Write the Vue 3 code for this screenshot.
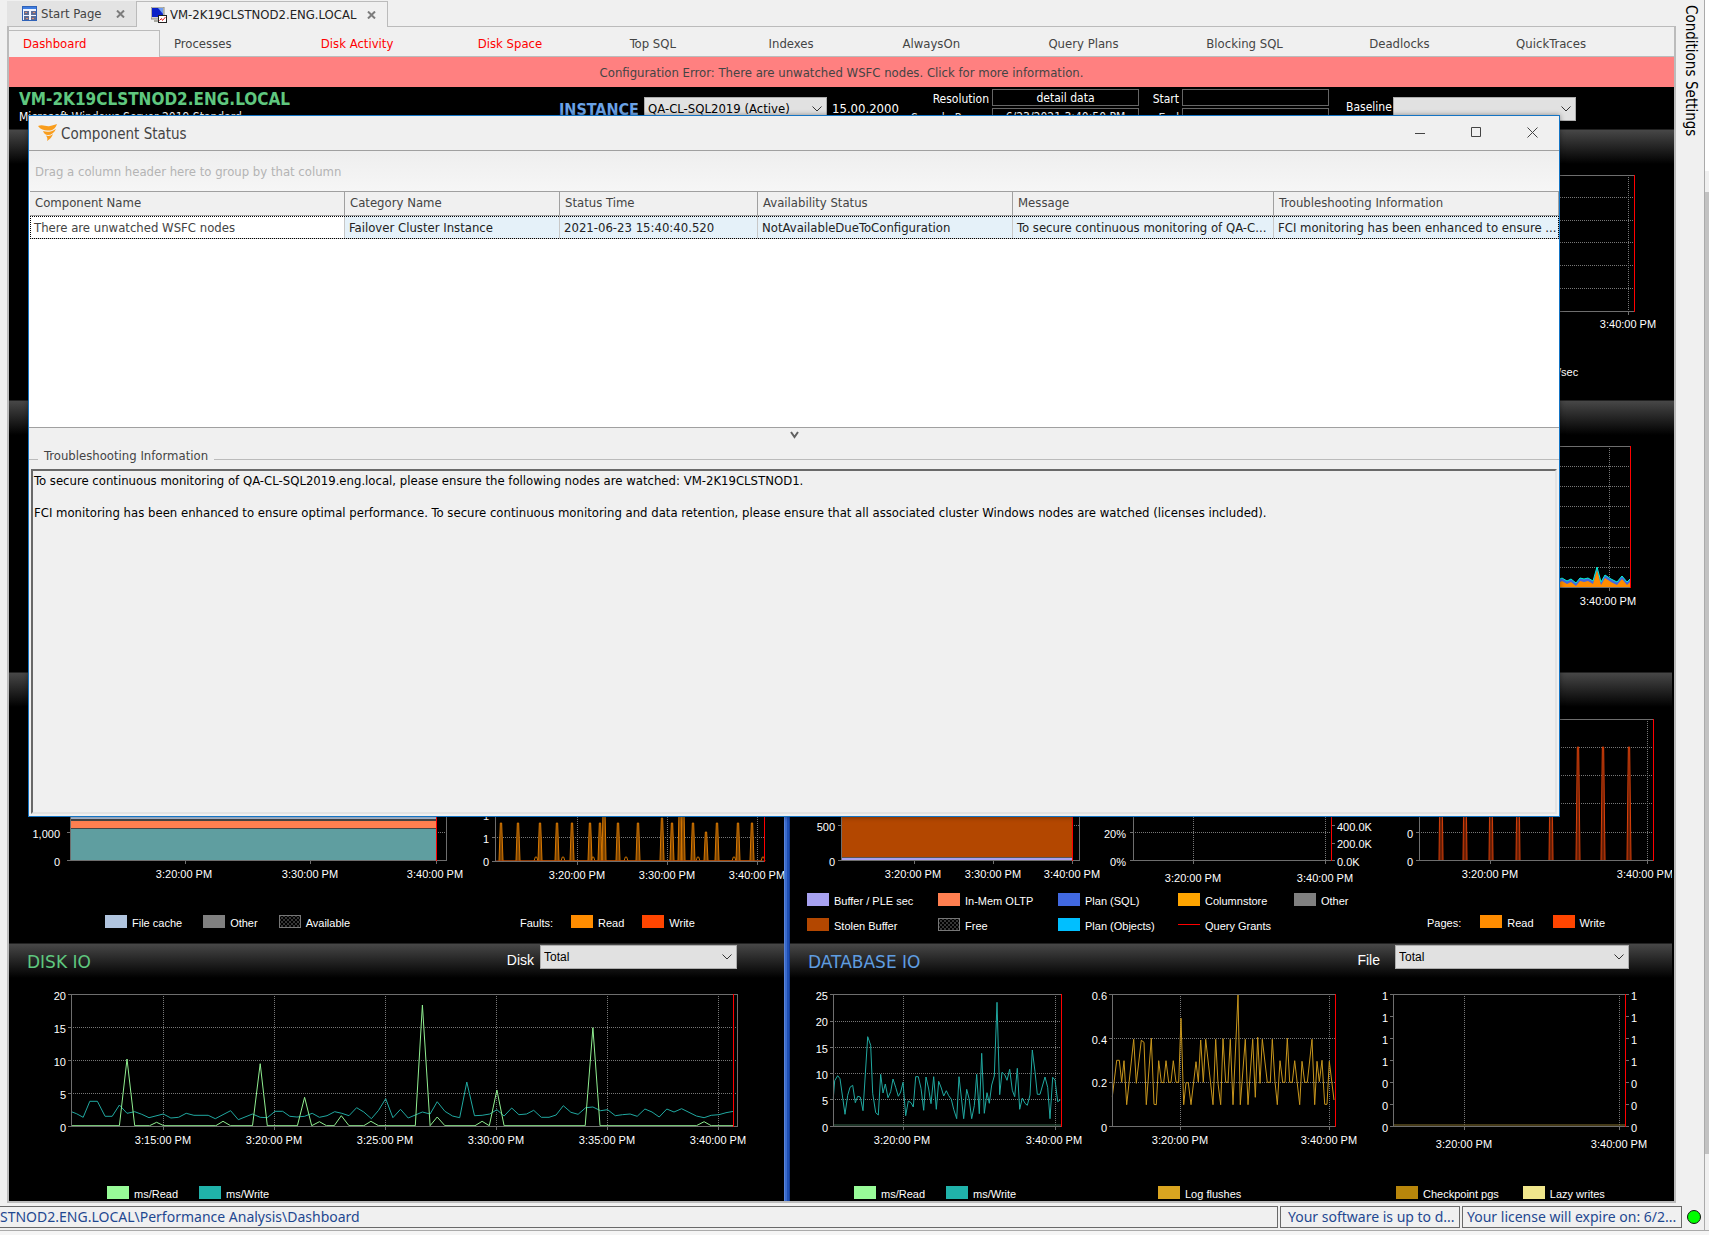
<script setup>
import { ref } from 'vue'

const mainTabs = [
  { label: 'Dashboard', size: 151, active: true, alert: true },
  { label: 'Processes', size: 147 },
  { label: 'Disk Activity', size: 157, alert: true },
  { label: 'Disk Space', size: 152, alert: true },
  { label: 'Top SQL', size: 139 },
  { label: 'Indexes', size: 134 },
  { label: 'AlwaysOn', size: 146 },
  { label: 'Query Plans', size: 158 },
  { label: 'Blocking SQL', size: 163 },
  { label: 'Deadlocks', size: 147 },
  { label: 'QuickTraces', size: 172 },
]
const tabColumns = mainTabs.map((t) => `${t.size}fr`).join(' ')

const instance = ref('QA-CL-SQL2019 (Active)')
const baseline = ref('')

const columns = [
  { name: 'Component Name', value: 'There are unwatched WSFC nodes', width: 315 },
  { name: 'Category Name', value: 'Failover Cluster Instance', width: 215 },
  { name: 'Status Time', value: '2021-06-23 15:40:40.520', width: 198 },
  { name: 'Availability Status', value: 'NotAvailableDueToConfiguration', width: 255 },
  { name: 'Message', value: 'To secure continuous monitoring of QA-C...', width: 261 },
  { name: 'Troubleshooting Information', value: 'FCI monitoring has been enhanced to ensure ...', width: 285 },
]
const totalWidth = columns.reduce((sum, c) => sum + c.width, 0)

// Turns a flat list of raw samples into polyline points on the dashboard canvas.
function points(raw, x0, y0, sx = 1, sy = 1) {
  const out = []
  for (let i = 0; i < raw.length; i += 2) {
    out.push(`${(x0 + raw[i] * sx).toFixed(1)},${(y0 + raw[i + 1] * sy).toFixed(1)}`)
  }
  return out.join(' ')
}

function spikes(peaks, base, half) {
  return peaks
    .map(([x, y]) => `${x - half},${base} ${x - half / 3},${y} ${x + half / 3},${y} ${x + half},${base}`)
    .join(' ')
}

const diskRead = [140, 437, 234, 437, 249, 237, 264, 437, 293, 437, 307, 427, 321, 437, 423, 437, 437, 424, 452, 437, 495, 437, 510, 251, 524, 437, 583, 437, 597, 352, 611, 437, 626, 425, 640, 437, 655, 437, 669, 407, 684, 437, 713, 437, 727, 424, 742, 437, 814, 437, 828, 75, 843, 437, 857, 411, 872, 437, 931, 437, 945, 424, 959, 437, 974, 330, 988, 437, 1147, 437, 1162, 143, 1176, 437, 1365, 437, 1380, 425, 1394, 437, 1438, 437]
const diskWrite = [140, 395, 150, 401, 163, 412, 176, 364, 191, 364, 206, 409, 220, 409, 234, 375, 249, 400, 264, 395, 278, 403, 292, 413, 320, 402, 335, 414, 350, 412, 365, 400, 380, 406, 408, 406, 422, 416, 452, 392, 467, 419, 495, 402, 510, 412, 524, 413, 539, 394, 554, 394, 568, 409, 582, 411, 597, 409, 612, 400, 626, 412, 641, 407, 656, 395, 670, 400, 684, 407, 699, 383, 713, 396, 728, 416, 742, 391, 756, 356, 770, 413, 785, 388, 800, 414, 814, 405, 828, 396, 843, 402, 857, 365, 872, 394, 887, 408, 901, 413, 915, 306, 930, 407, 945, 406, 960, 402, 974, 389, 988, 408, 1003, 384, 1017, 404, 1032, 402, 1046, 391, 1061, 412, 1076, 412, 1090, 405, 1104, 377, 1119, 397, 1133, 403, 1148, 383, 1162, 381, 1177, 392, 1191, 389, 1206, 407, 1220, 404, 1235, 402, 1249, 409, 1264, 387, 1278, 396, 1292, 411, 1307, 387, 1321, 396, 1336, 386, 1365, 408, 1380, 413, 1394, 406, 1409, 404, 1423, 398, 1438, 394]
const dbWrite = [160, 355, 164, 302, 173, 287, 180, 296, 195, 403, 203, 346, 210, 322, 218, 316, 226, 368, 233, 349, 241, 351, 249, 392, 263, 170, 272, 196, 278, 340, 287, 398, 295, 405, 302, 283, 309, 339, 316, 312, 324, 353, 332, 335, 339, 297, 347, 322, 355, 349, 362, 336, 369, 307, 377, 407, 385, 363, 393, 368, 400, 381, 407, 290, 415, 290, 423, 325, 431, 391, 438, 291, 446, 327, 453, 371, 461, 290, 469, 388, 476, 304, 484, 324, 491, 348, 499, 332, 506, 347, 514, 358, 521, 388, 530, 416, 537, 290, 551, 416, 560, 328, 567, 355, 575, 416, 583, 377, 590, 283, 598, 401, 605, 220, 613, 400, 621, 338, 628, 370, 635, 315, 643, 288, 651, 67, 659, 344, 666, 277, 674, 284, 681, 301, 689, 268, 697, 331, 704, 350, 712, 265, 719, 388, 727, 354, 735, 370, 742, 376, 750, 345, 757, 210, 765, 275, 772, 343, 780, 343, 795, 291, 803, 322, 810, 416, 818, 292, 825, 300, 833, 365, 841, 360]
const logFlushes = [997, 350, 1010, 241, 1018, 241, 1025, 307, 1032, 242, 1040, 374, 1061, 178, 1069, 310, 1084, 181, 1092, 187, 1099, 374, 1114, 175, 1122, 373, 1129, 374, 1136, 242, 1144, 307, 1151, 308, 1158, 242, 1166, 307, 1173, 307, 1180, 242, 1188, 307, 1196, 307, 1203, 115, 1211, 374, 1218, 308, 1225, 308, 1233, 374, 1248, 245, 1255, 306, 1262, 180, 1270, 307, 1277, 178, 1299, 374, 1307, 178, 1314, 310, 1322, 374, 1329, 176, 1337, 307, 1344, 307, 1351, 178, 1359, 374, 1374, 45, 1381, 374, 1396, 178, 1404, 374, 1418, 178, 1426, 352, 1433, 172, 1440, 310, 1447, 178, 1462, 307, 1471, 307, 1477, 178, 1485, 305, 1492, 374, 1500, 242, 1508, 307, 1515, 307, 1522, 175, 1529, 307, 1537, 307, 1544, 242, 1559, 374, 1566, 244, 1574, 307, 1582, 307, 1596, 178, 1604, 374, 1611, 244, 1618, 305, 1626, 241, 1634, 373, 1641, 373, 1648, 244, 1662, 360]
const netArea = [1550, 580, 1560, 579, 1562, 578, 1567, 581, 1571, 579, 1576, 583, 1580, 578, 1584, 579, 1588, 578, 1593, 581, 1597, 567, 1601, 582, 1605, 575, 1611, 579, 1617, 582, 1622, 576, 1627, 582, 1631, 578]
const netLower = netArea.map((v, i) => (i % 2 ? Math.min(v + 3, 587) : v))

const faultPeaks = [[501, 823], [518, 823], [540, 823], [557, 823], [572, 823], [590, 823], [600, 823], [604, 790], [618, 823], [638, 823], [662, 818], [672, 823], [680, 790], [683, 790], [693, 823], [706, 832], [717, 823], [738, 823], [752, 823]]
const faultBumps = [[536, 857], [563, 857], [593, 857], [626, 857], [698, 857], [734, 857], [763, 857]]
const pagePeaks = [1441, 1465, 1491, 1518, 1551, 1578, 1603, 1629].map((x) => [x, 747])

const panels = [
  { key: 'network', side: 'left', groups: [] },
  {
    key: 'activity', side: 'right', wide: true,
    groups: [{
      key: 'a', size: 884, indent: 768, gap: 19, legend: [{ label: '/sec' }],
      charts: [{ key: 'a', box: [790, 164, 884, 198], frame: [1440, 175, 1634, 311], now: 1634, h: [197, 220, 242, 265, 288], v: [1628], xLabels: [[1628, '3:40:00 PM']], xLabelY: 328 }],
    }],
  },
  { key: 'cpu', side: 'left', groups: [] },
  {
    key: 'waits', side: 'right', wide: true,
    groups: [{
      key: 'a', size: 884, indent: 768, gap: 19, legend: [],
      charts: [{
        key: 'a', box: [790, 435, 884, 198], frame: [1440, 446, 1630, 587], now: 1630, h: [466, 486, 506, 527, 547, 567], v: [1609], xLabels: [[1608, '3:40:00 PM']], xLabelY: 605,
        areas: [
          { fill: '#4169e1', points: `1550,587 ${points(netArea, 0, 0)} 1631,587` },
          { fill: '#ff8c00', points: `1550,587 ${points(netLower, 0, 0)} 1631,587` },
        ],
        lines: [{ color: '#00f5d8', points: points(netArea, 0, 0) }],
      }],
    }],
  },
  {
    key: 'memory', side: 'left',
    groups: [
      {
        key: 'a', size: 471, indent: 96, gap: 21,
        legend: [{ color: '#b0c4de', label: 'File cache' }, { color: '#808080', label: 'Other' }, { hatch: true, label: 'Available' }],
        charts: [{
          key: 'a', box: [9, 707, 471, 206], frame: [70, 719, 446, 860], now: 436, h: [832],
          rects: [[71, 719, 365, 101, '#b0c4de'], [71, 819, 365, 3, '#444444'], [71, 821, 365, 7, '#ff7f50'], [71, 828, 365, 1, '#444444'], [71, 829, 365, 31, '#5f9ea0']],
          ticks: [185, 310, 436], yTicks: [832, 860], yLabels: [[838, '1,000'], [866, '0']], yLabelX: 60,
          xLabels: [[184, '3:20:00 PM'], [310, '3:30:00 PM'], [435, '3:40:00 PM']], xLabelY: 878,
        }],
      },
      {
        key: 'b', size: 304, indent: 40, gap: 18,
        legend: [{ label: 'Faults:' }, { color: '#ff8c00', label: 'Read' }, { color: '#ff4500', label: 'Write' }],
        charts: [{
          key: 'b', box: [480, 707, 304, 206], frame: [495, 719, 764, 861], now: 764, h: [837], v: [577, 667, 757], yTicks: [837, 861],
          yLabels: [[820, '1'], [843, '1'], [866, '0']], yLabelX: 489,
          xLabels: [[577, '3:20:00 PM'], [667, '3:30:00 PM'], [757, '3:40:00 PM']], xLabelY: 879,
          areas: [{ fill: '#7a4300', points: spikes(faultPeaks, 861, 2) }],
          lines: [{ color: '#d87800', points: spikes(faultPeaks, 861, 2) }, { color: '#c87000', points: spikes(faultBumps, 861, 2) }, { color: '#b03a10', points: '495,861 764,861' }],
        }],
      },
    ],
  },
  {
    key: 'sql-memory', side: 'right',
    groups: [
      {
        key: 'a', size: 595, indent: 17, grid: true,
        legend: [
          { color: '#a7a1f0', label: 'Buffer / PLE sec' }, { color: '#ff7f50', label: 'In-Mem OLTP' }, { color: '#4169e1', label: 'Plan (SQL)' }, { color: '#ffa500', label: 'Columnstore' }, { color: '#808080', label: 'Other' },
          { color: '#b34700', label: 'Stolen Buffer' }, { hatch: true, label: 'Free' }, { color: '#00bfff', label: 'Plan (Objects)' }, { line: true, label: 'Query Grants' },
        ],
        charts: [
          {
            key: 'a', box: [790, 707, 305, 184], frame: [841, 719, 1079, 860], now: 1072, h: [825],
            rects: [[842, 719, 230, 138, '#b34700'], [842, 857, 230, 1, '#555555'], [842, 858, 230, 2, '#a7a1f0']],
            ticks: [914, 993, 1072], yTicks: [825, 860], yLabels: [[831, '500'], [866, '0']], yLabelX: 835,
            xLabels: [[913, '3:20:00 PM'], [993, '3:30:00 PM'], [1072, '3:40:00 PM']], xLabelY: 878,
          },
          {
            key: 'b', box: [1095, 707, 290, 184], frame: [1133, 719, 1331, 860], now: 1331, h: [832], v: [1193, 1325], yTicks: [832, 860], rightTicks: [825, 843, 860],
            yLabels: [[838, '20%'], [866, '0%']], yLabelX: 1126, rightLabels: [[831, '400.0K'], [848, '200.0K'], [866, '0.0K']], rightLabelX: 1337,
            xLabels: [[1193, '3:20:00 PM'], [1325, '3:40:00 PM']], xLabelY: 882,
          },
        ],
      },
      {
        key: 'b', size: 287, indent: 42, gap: 19,
        legend: [{ label: 'Pages:' }, { color: '#ff8c00', label: 'Read' }, { color: '#ff4500', label: 'Write' }],
        charts: [{
          key: 'a', box: [1385, 707, 287, 206], frame: [1419, 719, 1653, 860], now: 1653, h: [747, 775, 803, 832], v: [1490, 1647], yTicks: [832, 860],
          yLabels: [[838, '0'], [866, '0']], yLabelX: 1413,
          xLabels: [[1490, '3:20:00 PM'], [1645, '3:40:00 PM']], xLabelY: 878,
          areas: [{ fill: '#6b1f05', points: spikes(pagePeaks, 860, 2) }],
          lines: pagePeaks.map((peak) => ({ color: '#d8400a', points: spikes([peak], 860, 2) })),
        }],
      },
    ],
  },
  {
    key: 'disk-io', side: 'left', title: 'DISK IO', control: { label: 'Disk', width: 197, end: 47 },
    groups: [{
      key: 'a', size: 775, indent: 98, gap: 21,
      legend: [{ color: '#98fb98', label: 'ms/Read' }, { color: '#20b2aa', label: 'ms/Write' }],
      charts: [{
        key: 'a', box: [9, 978, 775, 206], frame: [71, 994, 737, 1126], now: 733, h: [1027, 1060, 1093], v: [163, 274, 385, 496, 607, 718], yTicks: [994, 1027, 1060, 1093, 1126],
        yLabels: [[1000, '20'], [1033, '15'], [1066, '10'], [1099, '5'], [1132, '0']], yLabelX: 66,
        xLabels: [[163, '3:15:00 PM'], [274, '3:20:00 PM'], [385, '3:25:00 PM'], [496, '3:30:00 PM'], [607, '3:35:00 PM'], [718, '3:40:00 PM']], xLabelY: 1144,
        lines: [{ color: '#20a8a0', points: points(diskWrite, 0, 980, 0.5102, 1 / 3) }, { color: '#90ee90', points: points(diskRead, 0, 980, 0.5102, 1 / 3) }],
      }],
    }],
  },
  {
    key: 'database-io', side: 'right', title: 'DATABASE IO', control: { label: 'File', width: 234, end: 43 },
    groups: [
      {
        key: 'a', size: 290, indent: 64, gap: 21,
        legend: [{ color: '#98fb98', label: 'ms/Read' }, { color: '#20b2aa', label: 'ms/Write' }],
        charts: [{
          key: 'a', box: [790, 978, 290, 206], frame: [833, 994, 1061, 1126], now: 1061, h: [1021, 1047, 1073, 1099], v: [903, 1055], yTicks: [994, 1021, 1047, 1073, 1099, 1126],
          yLabels: [[1000, '25'], [1026, '20'], [1053, '15'], [1079, '10'], [1105, '5'], [1132, '0']], yLabelX: 828,
          xLabels: [[902, '3:20:00 PM'], [1054, '3:40:00 PM']], xLabelY: 1144,
          lines: [{ color: '#3c6a50', points: '834,1125 1061,1125' }, { color: '#20a8a0', points: points(dbWrite, 780, 980, 1 / 3, 1 / 3) }],
        }],
      },
      {
        key: 'b', size: 270, indent: 78, gap: 21,
        legend: [{ color: '#daa520', label: 'Log flushes' }],
        charts: [{
          key: 'a', box: [1080, 978, 270, 206], frame: [1112, 994, 1335, 1126], now: 1335, h: [1038, 1082], v: [1180, 1329], yTicks: [994, 1038, 1082, 1126],
          yLabels: [[1000, '0.6'], [1044, '0.4'], [1087, '0.2'], [1132, '0']], yLabelX: 1107,
          xLabels: [[1180, '3:20:00 PM'], [1329, '3:40:00 PM']], xLabelY: 1144,
          lines: [{ color: '#c8961c', points: points(logFlushes, 780, 980, 1 / 3, 1 / 3) }],
        }],
      },
      {
        key: 'c', size: 322, indent: 46, gap: 24,
        legend: [{ color: '#b8860b', label: 'Checkpoint pgs' }, { color: '#f0e68c', label: 'Lazy writes' }],
        charts: [{
          key: 'a', box: [1350, 978, 322, 206], frame: [1393, 994, 1625, 1126], now: 1625, v: [1464, 1619],
          yTicks: [994, 1016, 1038, 1060, 1082, 1104, 1126], rightTicks: [994, 1016, 1038, 1060, 1082, 1104, 1126],
          yLabels: [[1000, '1'], [1022, '1'], [1044, '1'], [1066, '1'], [1088, '0'], [1110, '0'], [1132, '0']], yLabelX: 1388,
          rightLabels: [[1000, '1'], [1022, '1'], [1044, '1'], [1066, '1'], [1088, '0'], [1110, '0'], [1132, '0']], rightLabelX: 1631,
          xLabels: [[1464, '3:20:00 PM'], [1619, '3:40:00 PM']], xLabelY: 1148,
          lines: [{ color: '#8a7430', points: '1394,1125 1625,1125' }],
        }],
      },
    ],
  },
]
</script>

<template>
  <div class="app">
    <div class="workspace">
      <main class="document">
        <nav class="doc-tabs" aria-label="Open documents">
          <div class="doc-tab">
            <svg width="16" height="16" viewBox="0 0 16 16" aria-hidden="true">
              <rect x="0.5" y="0.5" width="14" height="14" fill="#eef4ff" stroke="#2f62b8" />
              <rect x="1" y="1" width="13" height="2" fill="#3f7de0" />
              <path d="M2 5h5v4H2zM9 5h5v4H9zM2 10h5v4H2zM9 10h5v4H9z" fill="#5c6c94" />
              <path d="M3 6h2v1H3zM11 6h2v1h-2zM4 12h2v1H4zM10 12h2v1h-2z" fill="#e08a68" />
            </svg>
            <a href="#start">Start Page</a>
            <button class="close" type="button" aria-label="Close Start Page">
              <svg width="9" height="8" viewBox="0 0 9 8"><path d="M1 0.5L8 7.5M8 0.5L1 7.5" stroke="#7c7c7c" stroke-width="2" /></svg>
            </button>
          </div>
          <div class="doc-tab current">
            <svg width="16" height="16" viewBox="0 0 16 16" aria-hidden="true">
              <path d="M0 0h13v12H0z" fill="#d4d4cc" stroke="#8a8a84" stroke-width="1" />
              <rect x="1" y="1" width="11" height="9" fill="#0a22c8" />
              <path d="M7 1h5v6z" fill="#6f9cf4" />
              <path d="M3 13h7v2H3z" fill="#a8a8a0" />
              <rect x="7.500" y="8.500" width="8" height="7" fill="#fff" stroke="#222" />
              <path d="M8.500 13.500l2-2 1 2 3-3.500" fill="none" stroke="#e02020" />
            </svg>
            <a href="#node">VM-2K19CLSTNOD2.ENG.LOCAL</a>
            <button class="close" type="button" aria-label="Close VM-2K19CLSTNOD2.ENG.LOCAL">
              <svg width="9" height="8" viewBox="0 0 9 8"><path d="M1 0.5L8 7.5M8 0.5L1 7.5" stroke="#7c7c7c" stroke-width="2" /></svg>
            </button>
          </div>
        </nav>

        <div class="frame">
          <nav class="main-tabs" :style="{ gridTemplateColumns: tabColumns }" aria-label="Views">
            <a v-for="tab in mainTabs" :key="tab.label" href="#" :class="{ active: tab.active, alert: tab.alert }">{{ tab.label }}</a>
          </nav>
          <button class="banner" type="button">Configuration Error: There are unwatched WSFC nodes. Click for more information.</button>

          <div class="stage">
            <header class="server-bar">
              <div class="server">
                <h1>VM-2K19CLSTNOD2.ENG.LOCAL</h1>
                <p>Microsoft Windows Server 2019 Standard</p>
              </div>
              <div class="instance">
                <label for="instance">INSTANCE</label>
                <span class="combo">
                  <select id="instance" v-model="instance"><option>QA-CL-SQL2019 (Active)</option></select>
                  <svg width="10" height="6" viewBox="0 0 10 6"><path d="M0.500 0.500L5 5L9.500 0.500" /></svg>
                </span>
                <span class="version">15.00.2000</span>
              </div>
              <div class="fields">
                <label for="resolution">Resolution</label><input id="resolution" value="detail data" />
                <label for="range">Sample Range</label><input id="range" value="6/23/2021 3:40:50 PM" />
              </div>
              <div class="fields times">
                <label for="start">Start</label><input id="start" />
                <label for="end">End</label><input id="end" />
              </div>
              <div class="baseline">
                <label for="baseline">Baseline</label>
                <span class="combo">
                  <select id="baseline" v-model="baseline"><option value=""></option></select>
                  <svg width="10" height="6" viewBox="0 0 10 6"><path d="M0.500 0.500L5 5L9.500 0.500" /></svg>
                </span>
              </div>
            </header>

            <div class="panels">
              <div class="splitter"></div>
              <section v-for="panel in panels" :key="panel.key" class="panel" :class="[panel.side, { wide: panel.wide }]">
                <header class="panel-head">
                  <h2 v-if="panel.title">{{ panel.title }}</h2>
                  <div v-if="panel.control" class="picker" :style="{ marginRight: panel.control.end + 'px' }">
                    <label :for="panel.key">{{ panel.control.label }}</label>
                    <span class="combo" :style="{ width: panel.control.width + 'px' }">
                      <select :id="panel.key"><option>Total</option></select>
                      <svg width="10" height="6" viewBox="0 0 10 6"><path d="M0.500 0.500L5 5L9.500 0.500" /></svg>
                    </span>
                  </div>
                </header>
                <div v-if="panel.groups.length" class="groups" :style="{ gridTemplateColumns: panel.groups.map((g) => g.size + 'fr').join(' ') }">
                  <div v-for="group in panel.groups" :key="group.key" class="group">
                    <div class="charts">
                      <svg v-for="c in group.charts" :key="c.key" class="chart" :width="c.box[2]" :height="c.box[3]" :viewBox="c.box.join(' ')">
                        <g class="fills"><rect v-for="(r, i) in c.rects" :key="i" :x="r[0]" :y="r[1]" :width="r[2]" :height="r[3]" :fill="r[4]" /></g>
                        <g class="dots">
                          <line v-for="y in c.h" :key="'h' + y" :x1="c.rects ? c.now : c.frame[0]" :x2="c.frame[2]" :y1="y + 0.5" :y2="y + 0.5" />
                          <line v-for="x in c.v" :key="'v' + x" :x1="x + 0.5" :x2="x + 0.5" :y1="c.frame[1]" :y2="c.frame[3]" />
                        </g>
                        <polygon v-for="(a, i) in c.areas" :key="'a' + i" :points="a.points" :fill="a.fill" />
                        <polyline v-for="(l, i) in c.lines" :key="'s' + i" :points="l.points" :stroke="l.color" fill="none" />
                        <g class="axes">
                          <rect :x="c.frame[0] + 0.5" :y="c.frame[1] + 0.5" :width="c.frame[2] - c.frame[0]" :height="c.frame[3] - c.frame[1]" />
                          <line v-for="x in c.ticks || c.v" :key="'t' + x" :x1="x + 0.5" :x2="x + 0.5" :y1="c.frame[3]" :y2="c.frame[3] + 4" />
                          <line v-for="y in c.yTicks" :key="'l' + y" :x1="c.frame[0] - 3" :x2="c.frame[0]" :y1="y + 0.5" :y2="y + 0.5" />
                          <line v-for="y in c.rightTicks" :key="'r' + y" :x1="c.frame[2]" :x2="c.frame[2] + 4" :y1="y + 0.5" :y2="y + 0.5" />
                        </g>
                        <line class="now" :x1="c.now + 0.5" :x2="c.now + 0.5" :y1="c.frame[1]" :y2="c.frame[3] + 1" />
                        <text v-for="(l, i) in c.yLabels" :key="'y' + i" :x="c.yLabelX" :y="l[0]" text-anchor="end">{{ l[1] }}</text>
                        <text v-for="(l, i) in c.rightLabels" :key="'z' + i" :x="c.rightLabelX" :y="l[0]">{{ l[1] }}</text>
                        <text v-for="l in c.xLabels" :key="l[0]" :x="l[0]" :y="c.xLabelY" text-anchor="middle">{{ l[1] }}</text>
                      </svg>
                    </div>
                    <ul class="legend" :class="{ grid: group.grid }" :style="{ paddingLeft: group.indent + 'px', columnGap: (group.gap || 0) + 'px' }">
                      <li v-for="item in group.legend" :key="item.label">
                        <i v-if="item.color" class="swatch" :style="{ background: item.color }"></i>
                        <i v-else-if="item.hatch" class="swatch hatch"></i>
                        <i v-else-if="item.line" class="swatch rule"></i>
                        <span>{{ item.label }}</span>
                      </li>
                    </ul>
                  </div>
                </div>
              </section>
            </div>
          </div>
        </div>
      </main>

      <aside class="side-tabs">
        <a href="#conditions">Conditions</a>
        <a href="#settings">Settings</a>
      </aside>
      <div class="scrollbar"><div class="thumb"></div></div>
    </div>

    <footer class="status">
      <span class="cell path">STNOD2.ENG.LOCAL\Performance Analysis\Dashboard</span>
      <span class="cell update">Your software is up to d...</span>
      <span class="cell license">Your license will expire on: 6/2...</span>
      <span class="led"></span>
    </footer>
    <div class="under"></div>

    <section class="dialog" role="dialog" aria-labelledby="dialog-title">
      <header class="title-bar">
        <svg width="20" height="17" viewBox="0 0 20 17" aria-hidden="true">
          <path d="M0 2C5 0 8 3 12 2C15 1 17 1 19 0C18 3 16 6 12 6.500C7 7 3 6 0 2Z" fill="#f99d1c" />
          <path d="M5 7C9 8.500 13 8 18 5C16 9 13 11 10 11C7.500 11 6 9.500 5 7Z" fill="#f99d1c" />
          <path d="M8 11.500C10 12.500 13 12 15 10C14 13 12 15 9 17C10 14.500 9 13 8 11.500Z" fill="#f99d1c" />
        </svg>
        <h2 id="dialog-title">Component Status</h2>
        <div class="window-buttons">
          <button type="button" aria-label="Minimize"><svg width="11" height="11"><path d="M0 6.500h10" /></svg></button>
          <button type="button" aria-label="Maximize"><svg width="11" height="11"><path d="M0.500 0.500h9v9h-9z" /></svg></button>
          <button type="button" aria-label="Close"><svg width="11" height="11"><path d="M0.500 0.500l10 10M10.500 0.500l-10 10" /></svg></button>
        </div>
      </header>
      <div class="group-hint">Drag a column header here to group by that column</div>
      <div class="grid-area">
        <table>
          <colgroup><col v-for="c in columns" :key="c.name" :style="{ width: (c.width / totalWidth) * 100 + '%' }" /></colgroup>
          <thead><tr><th v-for="c in columns" :key="c.name" scope="col">{{ c.name }}</th></tr></thead>
          <tbody><tr><td v-for="c in columns" :key="c.name">{{ c.value }}</td></tr></tbody>
        </table>
      </div>
      <div class="grip">
        <svg width="9" height="8" viewBox="0 0 9 8"><path d="M1 1L4.500 6L8 1" fill="none" stroke="#606060" stroke-width="2" /></svg>
      </div>
      <h3 class="section-label"><span>Troubleshooting Information</span></h3>
      <div class="details">
        <p>To secure continuous monitoring of QA-CL-SQL2019.eng.local, please ensure the following nodes are watched: VM-2K19CLSTNOD1.</p>
        <p>FCI monitoring has been enhanced to ensure optimal performance. To secure continuous monitoring and data retention, please ensure that all associated cluster Windows nodes are watched (licenses included).</p>
      </div>
    </section>
  </div>
</template>

<style>
body { margin: 0; background: #f0f0f0; }
</style>

<style scoped>
* { box-sizing: border-box; }
.app { position: relative; overflow: hidden; background: #f0f0f0; color: #444; font: 13px/16px "DejaVu Sans Condensed", "DejaVu Sans", sans-serif; }
h1, h2, h3, p, ul { margin: 0; padding: 0; font-weight: 400; }
a { color: inherit; text-decoration: none; }
button { font: inherit; color: inherit; border: 0; background: none; padding: 0; }

.workspace { display: flex; }
.document { flex: 1; min-width: 0; padding-left: 7px; }
.doc-tabs { display: flex; height: 27px; padding-top: 1px; }
.doc-tab { display: flex; align-items: center; width: 129px; padding: 0 11px 0 15px; background: #e3e3e3; border-bottom: 1px solid #bbb; line-height: 26px; white-space: nowrap; }
.doc-tab a { margin-left: 3px; }
.doc-tab .close { display: flex; margin-left: auto; }
.doc-tab.current { width: 252px; padding-left: 14px; background: #f0f0f0; border: 1px solid #bbb; border-bottom: 0; color: #222; }
.doc-tabs::after { content: ""; flex: 1; border-bottom: 1px solid #bbb; }

.frame { border: 2px solid #bbb; border-top: 0; }
.main-tabs { display: grid; height: 30px; padding-top: 3px; }
.main-tabs a { padding: 0 14px; border-bottom: 1px solid #bbb; line-height: 28px; white-space: nowrap; overflow: hidden; }
.main-tabs .active { border: 1px solid #bbb; border-bottom: 0; border-left: 0; line-height: 26px; }
.main-tabs .alert { color: #f00; }
.banner { display: block; width: 100%; height: 30px; padding-top: 1px; background: #ff8080; line-height: 29px; text-align: center; }

.stage { background: #000; color: #fff; }
.server-bar { display: grid; grid-template-columns: 550fr 374fr 219fr 194fr 328fr; height: 42px; overflow: hidden; white-space: nowrap; }
.server { padding: 2px 0 0 10px; }
.server h1 { color: #5fc77f; font-size: 17px; line-height: 20px; font-weight: 700; }
.server p { font-size: 12px; line-height: 16px; }
.instance { display: flex; align-items: flex-start; padding-top: 10px; gap: 5px; }
.instance label { width: 80px; padding-top: 4px; color: #6aa2e6; font-size: 16px; line-height: 18px; font-weight: 700; }
.instance .combo { width: 183px; }
.version { line-height: 24px; }
.fields { display: grid; grid-template-columns: 56px 147px; grid-auto-rows: 17px; gap: 2px 3px; padding-top: 2px; justify-content: start; font-size: 12px; }
.fields label { display: flex; justify-content: flex-end; line-height: 20px; }
.fields input { width: 100%; height: 17px; padding: 0; border: 1px solid #666; background: #000; color: #fff; font: inherit; text-align: center; }
.times { grid-template-columns: 27px 147px; }
.baseline { display: flex; align-items: flex-start; gap: 1px; padding-top: 10px; font-size: 12px; line-height: 20px; }
.baseline .combo { width: 183px; }

.combo { position: relative; display: block; height: 24px; }
.combo select { display: block; appearance: none; width: 100%; height: 24px; margin: 0; padding: 0 24px 0 3px; border: 1px solid #adadad; border-radius: 0; background: #e1e1e1; color: #000; font: inherit; font-size: 13px; line-height: 18px; }
.combo svg { position: absolute; right: 5px; top: 9px; fill: none; stroke: #333; pointer-events: none; }

.panels { position: relative; display: grid; grid-template-columns: 775fr 6px 884fr; grid-template-rows: 271px 272px 271px 258px; }
.splitter { grid-column: 2; grid-row: 1 / -1; background: linear-gradient(90deg, #5a84dc 0 1px, #3a6bcc 1px 3px, #1f4fb4 3px 5px, #123c94 5px); }
.panel { min-width: 0; overflow: hidden; }
.left { grid-column: 1; }
.right { grid-column: 3; margin-right: 2px; }
.right.wide { margin-right: 0; }
.panel-head { display: flex; height: 35px; border-top: 1px solid #222; background: linear-gradient(#474747, #000); }
.panel-head h2 { padding: 6px 0 0 18px; color: #5fc77f; font: 17px/24px "DejaVu Sans", sans-serif; }
.right .panel-head h2 { color: #5f9de0; }
.picker { display: flex; gap: 6px; margin-left: auto; padding-top: 1px; font: 14px/30px "Liberation Sans", Arial, sans-serif; }
.right .picker { gap: 15px; }
.picker .combo select { padding-bottom: 1px; font-size: 12px; }
.groups { display: grid; }
.group { min-width: 0; }
.charts { display: flex; }
.chart { display: block; flex: none; overflow: visible; }
.chart text { fill: #fff; font: 11px "Liberation Sans", Arial, sans-serif; }
.dots { stroke: #777; stroke-dasharray: 1 1; shape-rendering: crispEdges; }
.axes { fill: none; stroke: #6e6e6e; shape-rendering: crispEdges; }
.now { stroke: #f00; shape-rendering: crispEdges; }
.legend { display: flex; list-style: none; font: 11px/17px "Liberation Sans", Arial, sans-serif; white-space: nowrap; }
.legend.grid { display: grid; grid-template-columns: 131px 120px 120px 116px 60px; row-gap: 6px; }
.legend li { display: flex; gap: 5px; }
.legend span { padding-top: 2px; }
.swatch { width: 22px; height: 13px; margin-top: 2px; }
.hatch { border: 1px solid #777; background-color: #000; background-image: radial-gradient(#6a6a6a 20%, transparent 30%), radial-gradient(#6a6a6a 20%, transparent 30%); background-size: 4px 4px; background-position: 0 0, 2px 2px; }
.rule { height: 1px; margin-top: 8px; background: #f00; }

.side-tabs { width: 28px; display: flex; flex-direction: column; gap: 5px; padding-top: 5px; color: #000; font-size: 15px; line-height: 26px; }
.side-tabs a { writing-mode: vertical-rl; }
.scrollbar { width: 5px; padding-top: 171px; border-left: 1px solid #aaa; background: linear-gradient(#fff 0 171px, #f0f0f0 171px); }
.thumb { height: 962px; margin-top: 21px; background: #c2c2c2; }

.status { display: flex; align-items: center; gap: 2px; height: 27px; margin-right: 4px; padding: 0 3px 0 0; border-right: 1px solid #aaa; color: #1f4890; font: 14px/20px "Noto Sans", "Open Sans", sans-serif; white-space: nowrap; }
.cell { height: 22px; border: 1px solid #696969; overflow: hidden; }
.path { flex: 1; border-left: 0; }
.update { width: 180px; padding-left: 7px; }
.license { width: 220px; padding-left: 4px; }
.led { width: 14px; height: 14px; margin-left: 3px; border: 1px solid #111; border-radius: 50%; background: #0f0; }
.under { height: 5px; border-top: 1px solid #aaa; background: #f5f5f5; }

.dialog { position: absolute; top: 115px; left: 28px; right: 149px; border: 1px solid #1474c4; background: #f0f0f0; box-shadow: 0 0 5px rgba(0, 0, 0, 0.4); }
.title-bar { display: flex; align-items: flex-start; height: 35px; padding: 8px 21px 0 9px; border-bottom: 1px solid #a0a0a0; }
.title-bar h2 { margin-left: 3px; font-size: 15px; line-height: 20px; }
.window-buttons { display: flex; gap: 45px; margin-left: auto; padding-top: 3px; }
.window-buttons svg { display: block; fill: none; stroke: #444; }
.group-hint { height: 40px; padding: 13px 6px 0; background: linear-gradient(#eee, #f6f6f6); color: #b4b4b4; }
.grid-area { height: 237px; padding-left: 1px; border-bottom: 1px solid #a0a0a0; background: #fff; }
table { width: 100%; table-layout: fixed; border-collapse: separate; border-spacing: 0; }
th { height: 25px; padding: 0 5px 2px; border: 1px solid #a0a0a0; border-left: 0; background: #f0f0f0; text-align: left; font-weight: 400; white-space: nowrap; }
td { height: 23px; padding: 1px 0 0 4px; border-right: 1px solid #c8c8c8; border-bottom: 1px solid #c8c8c8; background: #e5f1f9; color: #222; white-space: nowrap; overflow: hidden; }
td:first-child { background: #fff; color: #444; }
tbody tr { outline: 1px dotted #000; outline-offset: -1px; }
.grip { display: flex; justify-content: center; height: 16px; padding-top: 3px; }
.section-label { display: flex; align-items: center; gap: 6px; height: 25px; padding-bottom: 2px; font-size: 13px; }
.section-label::before { content: ""; width: 9px; height: 1px; margin-top: 7px; background: #bbb; }
.section-label::after { content: ""; flex: 1; height: 1px; margin-top: 7px; background: #bbb; }
.details { display: grid; align-content: start; gap: 16px; height: 345px; margin: 0 2px 2px; padding: 2px 1px; border: 2px solid #696969; border-right-color: #e3e3e3; border-bottom-color: #e3e3e3; color: #000; white-space: nowrap; }
</style>
